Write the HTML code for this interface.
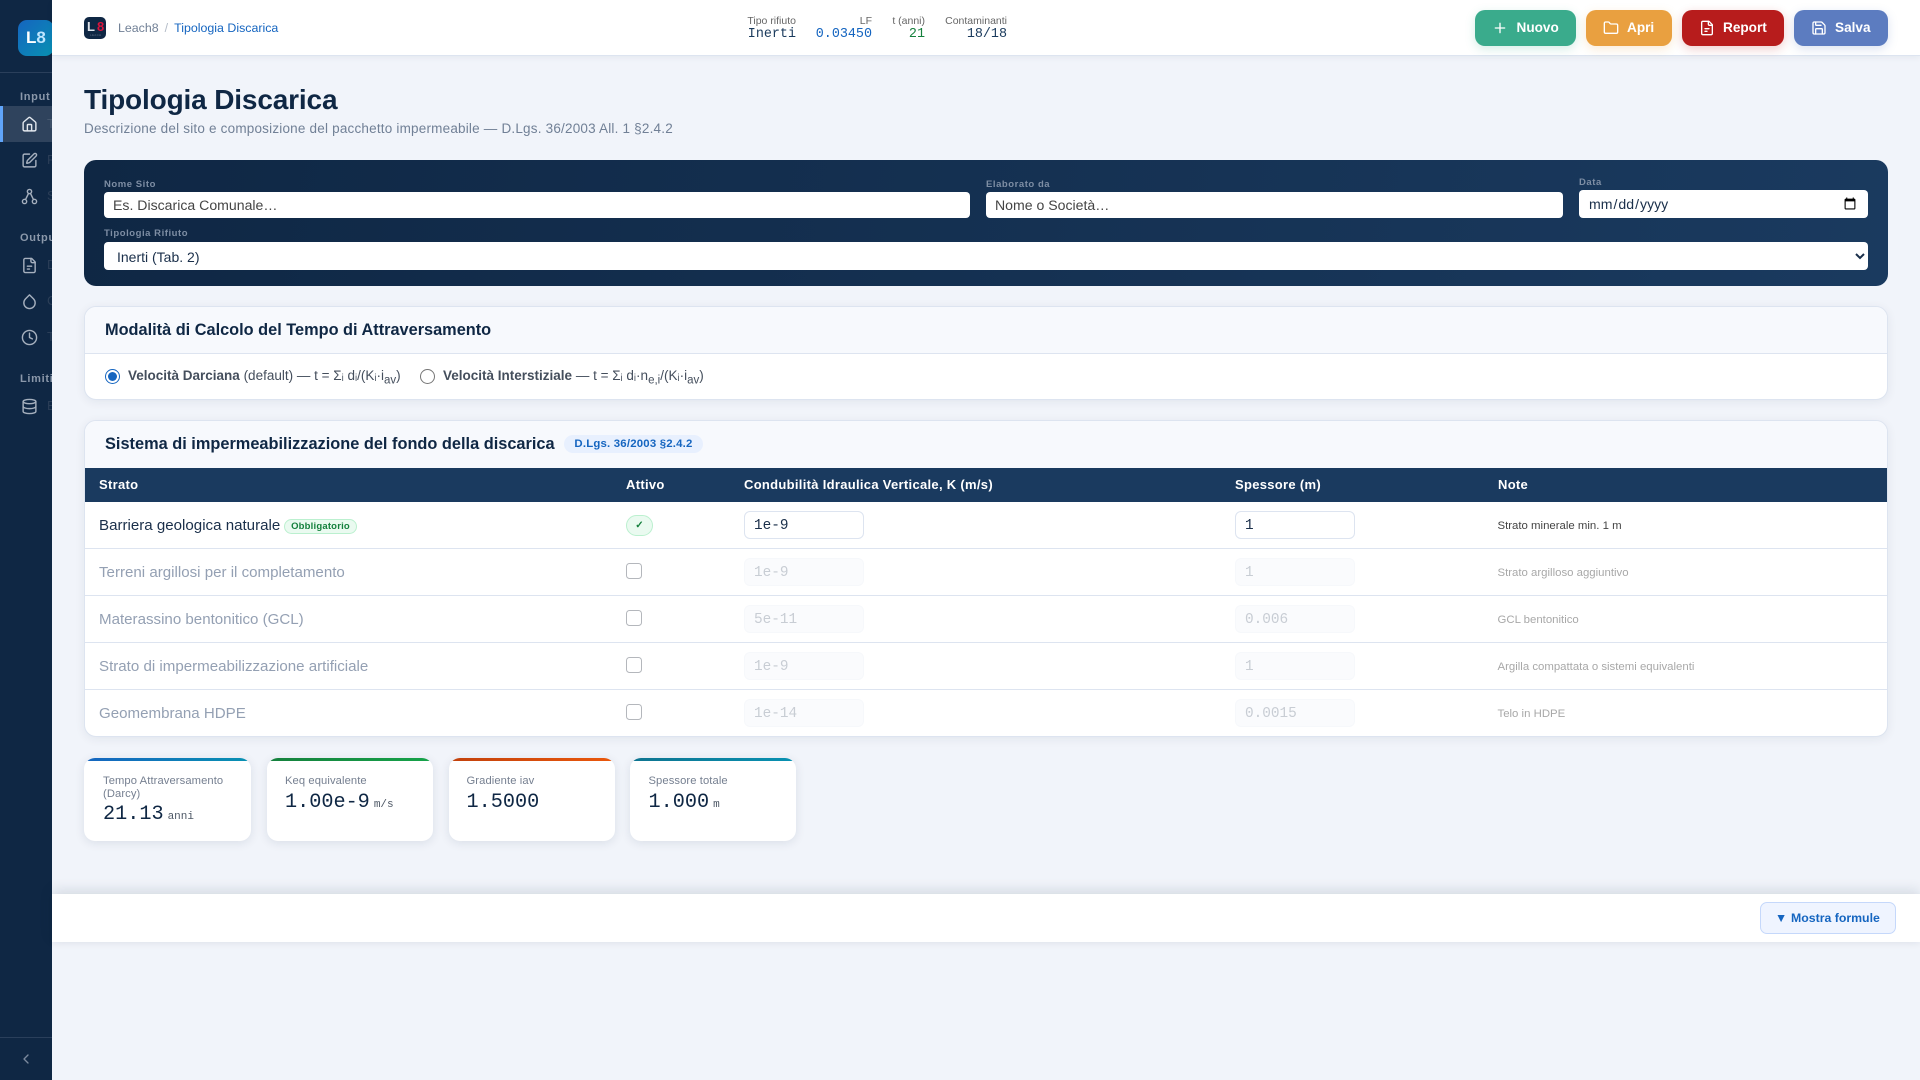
<!DOCTYPE html>
<html lang="it"><head><meta charset="utf-8"><title>Tipologia Discarica</title>
<style>
*{box-sizing:border-box}
html,body{margin:0;padding:0;width:1920px;height:1080px;overflow:hidden;background:#f1f4fa;font-family:"Liberation Sans",sans-serif}
.t{position:absolute;white-space:nowrap}
.m{font-family:"Liberation Mono",monospace}
svg.i{position:absolute;fill:none;stroke:currentColor;stroke-width:2;stroke-linecap:round;stroke-linejoin:round}
.abs{position:absolute}
.sec{position:absolute;left:20px;font-size:11px;font-weight:700;letter-spacing:.7px;color:#8b98aa;line-height:14px;white-space:nowrap}
.sl{position:absolute;left:47px;font-size:13px;color:#2b3e57;line-height:16px;width:5px;overflow:hidden}
.btn{position:absolute;top:10px;height:36px;border-radius:10px;color:#fff}
.btn b{position:absolute;top:0;line-height:35px;font-size:13.6px;white-space:nowrap}
.btn svg{top:10px;width:16px;height:16px;color:#fff}
.lbl{position:absolute;font-size:9.5px;font-weight:700;letter-spacing:.55px;color:#7e8ea4;line-height:12px;white-space:nowrap}
.f{position:absolute;border:0;margin:0;background:#fff;border-radius:4px;font:14.1px "Liberation Sans",sans-serif;color:#444;padding:0 9px;outline:0}
.card{position:absolute;left:84px;width:1804px;background:#fff;border:1px solid #dde4f0;border-radius:12px;box-shadow:0 2px 10px rgba(15,39,68,.07)}
.row{position:absolute;left:85px;width:1802px;height:47px;border-bottom:1.5px solid #dde4f0}
.th{position:absolute;top:477px;line-height:15px;font-size:13px;font-weight:700;letter-spacing:.3px;color:#fff;white-space:nowrap}
.nm{position:absolute;left:14px;line-height:18px;top:15px;font-size:15.1px;color:#1a2f4a;white-space:nowrap}
.off .nm{color:#94a0b3}
.in{position:absolute;top:9px;width:120px;height:28px;border:1.5px solid #dde4f0;border-radius:6px;background:#fff;font:14.4px/28px "Liberation Mono",monospace;color:#1a2f4a;padding-left:9px}
.off .in{background:#fafbfd;border-color:#f6f8fb;color:#c8cdd4}
.nt{position:absolute;left:1412.5px;top:17px;font-size:11.4px;line-height:14px;color:#444;white-space:nowrap}
.off .nt{color:#a8a8a8}
.cb{position:absolute;left:541px;top:14px;width:16px;height:16px;border:1.2px solid #b4b7bc;border-radius:3.5px;background:#fff}
.st{position:absolute;top:758px;height:83px;width:166px;background:#fff;border-radius:11px;overflow:hidden;box-shadow:0 2px 10px rgba(15,39,68,.10)}
.st i{position:absolute;left:0;top:0;right:0;height:3px}
.st .l{position:absolute;left:19px;top:17px;font-size:11.2px;line-height:12.5px;letter-spacing:.1px;color:#757f90;width:142px}
.st .v{position:absolute;left:19px;font:20.2px/24px "Liberation Mono",monospace;color:#0f2744;white-space:nowrap}
.st .v span{font-size:11px;color:#4d5765;margin-left:4px}
.hl{position:absolute;font-size:10.5px;line-height:12px;color:#666;white-space:nowrap;text-align:right}
.hv{position:absolute;font:13.4px/15px "Liberation Mono",monospace;white-space:nowrap;text-align:right}
</style></head><body>

<!-- sidebar -->
<div class="abs" style="left:0;top:0;width:52px;height:1080px;background:#0f2744;overflow:hidden">
  <div class="abs" style="left:18px;top:20px;width:36px;height:36px;border-radius:9px;background:linear-gradient(135deg,#1565c0,#0891b2)"></div>
  <div class="t" style="left:26px;top:28px;font-size:17px;font-weight:700;line-height:20px;color:#fff">L<span style="color:#bfe6ff">8</span></div>
  <div class="abs" style="left:0;top:72px;width:52px;height:1px;background:#2a3f5b"></div>
  <div class="sec" style="top:90px">Input</div>
  <div class="abs" style="left:0;top:106px;width:52px;height:36px;background:#2f435d;border-left:3px solid #60a5fa"></div>
  <svg class="i" viewBox="0 0 24 24" style="left:20.5px;top:115.5px;width:17px;height:17px;color:#e3e8ee"><path d="M15 21v-8a1 1 0 0 0-1-1h-4a1 1 0 0 0-1 1v8"/><path d="M3 10a2 2 0 0 1 .709-1.528l7-5.999a2 2 0 0 1 2.582 0l7 5.999A2 2 0 0 1 21 10v9a2 2 0 0 1-2 2H5a2 2 0 0 1-2-2z"/></svg>
  <div class="sl" style="top:116px;color:#46586f">T</div>
  <svg class="i" viewBox="0 0 24 24" style="left:20.5px;top:151.5px;width:17px;height:17px;color:#a6b0be"><path d="M12 3H5a2 2 0 0 0-2 2v14a2 2 0 0 0 2 2h14a2 2 0 0 0 2-2v-7"/><path d="M18.375 2.625a1 1 0 0 1 3 3l-9.013 9.014a2 2 0 0 1-.853.505l-2.873.84a.5.5 0 0 1-.62-.62l.84-2.873a2 2 0 0 1 .506-.852z"/></svg>
  <div class="sl" style="top:152px">P</div>
  <svg class="i" viewBox="0 0 24 24" style="left:20.5px;top:187.5px;width:17px;height:17px;color:#a6b0be"><circle cx="12" cy="5" r="3"/><circle cx="5" cy="19" r="3"/><circle cx="19" cy="19" r="3"/><path d="M10.6 7.7 6.4 16.3M13.4 7.7l4.2 8.6"/></svg>
  <div class="sl" style="top:188px">S</div>
  <div class="sec" style="top:231px">Output</div>
  <svg class="i" viewBox="0 0 24 24" style="left:20.5px;top:256.5px;width:17px;height:17px;color:#a6b0be"><path d="M15 2H6a2 2 0 0 0-2 2v16a2 2 0 0 0 2 2h12a2 2 0 0 0 2-2V7z"/><path d="M14 2v4a2 2 0 0 0 2 2h4"/><path d="M9 13h6M9 17h3"/></svg>
  <div class="sl" style="top:257px">D</div>
  <svg class="i" viewBox="0 0 24 24" style="left:20.5px;top:292.5px;width:17px;height:17px;color:#a6b0be"><path d="M12 2.69l5.66 5.66a8 8 0 1 1-11.31 0z"/></svg>
  <div class="sl" style="top:293px">C</div>
  <svg class="i" viewBox="0 0 24 24" style="left:20.5px;top:328.5px;width:17px;height:17px;color:#a6b0be"><circle cx="12" cy="12" r="10"/><path d="M12 6v6l4 2"/></svg>
  <div class="sl" style="top:329px">T</div>
  <div class="sec" style="top:372px">Limiti</div>
  <svg class="i" viewBox="0 0 24 24" style="left:20.5px;top:397.5px;width:17px;height:17px;color:#a6b0be"><ellipse cx="12" cy="5" rx="9" ry="3"/><path d="M3 5v14a9 3 0 0 0 18 0V5"/><path d="M3 12a9 3 0 0 0 18 0"/></svg>
  <div class="sl" style="top:398px">B</div>
  <div class="abs" style="left:0;top:1037px;width:52px;height:1px;background:#2a3f5b"></div>
  <svg class="i" viewBox="0 0 24 24" style="left:18px;top:1051px;width:16px;height:16px;color:#7b8a9e"><path d="m15 18-6-6 6-6"/></svg>
</div>

<!-- topbar -->
<div class="abs" style="left:52px;top:0;width:1868px;height:56px;background:#fff;border-bottom:1px solid #dde4f0;box-shadow:0 2px 6px rgba(15,39,68,.05)"></div>
<div class="abs" style="left:84px;top:17px;width:22px;height:22px;border-radius:5px;background:#0f2744"></div>
<div class="t" style="left:87px;top:20px;font-size:13px;font-weight:700;line-height:14px;color:#dfe4ea">L<span style="color:#dc143c;margin-left:2px">8</span></div>
<div class="t" style="left:90px;top:33px;font-size:3px;line-height:4px;letter-spacing:.3px;color:#5c6d84">LEACH</div>
<div class="t" style="left:118px;top:20px;font-size:12.4px;line-height:16px;color:#718096">Leach8<span style="color:#b4bcc8;margin:0 6px">/</span><span style="color:#1565c0">Tipologia Discarica</span></div>

<div class="hl" style="right:1124px;top:15px">Tipo rifiuto</div>
<div class="hv" style="right:1124px;top:26.5px;color:#1a3a5c">Inerti</div>
<div class="hl" style="right:1048px;top:15px">LF</div>
<div class="hv" style="right:1048px;top:26.5px;color:#1565c0">0.03450</div>
<div class="hl" style="right:995px;top:15px">t (anni)</div>
<div class="hv" style="right:995px;top:26.5px;color:#15803d">21</div>
<div class="hl" style="right:913px;top:15px">Contaminanti</div>
<div class="hv" style="right:913px;top:26.5px;color:#1a3a5c">18/18</div>

<div class="btn" style="left:1475px;width:101px;background:#3aab8c;box-shadow:0 3px 10px rgba(58,171,140,.22)">
  <svg class="i" viewBox="0 0 24 24" style="left:17px"><path d="M5 12h14M12 5v14"/></svg><b style="left:41.5px">Nuovo</b></div>
<div class="btn" style="left:1586px;width:86px;background:#e9a040;box-shadow:0 3px 10px rgba(233,160,64,.22)">
  <svg class="i" viewBox="0 0 24 24" style="left:17px"><path d="M20 20a2 2 0 0 0 2-2V8a2 2 0 0 0-2-2h-7.9a2 2 0 0 1-1.69-.9L9.6 3.9A2 2 0 0 0 7.93 3H4a2 2 0 0 0-2 2v13a2 2 0 0 0 2 2Z"/></svg><b style="left:41px">Apri</b></div>
<div class="btn" style="left:1682px;width:102px;background:#b71c1c;box-shadow:0 3px 10px rgba(183,28,28,.22)">
  <svg class="i" viewBox="0 0 24 24" style="left:17px"><path d="M15 2H6a2 2 0 0 0-2 2v16a2 2 0 0 0 2 2h12a2 2 0 0 0 2-2V7z"/><path d="M14 2v4a2 2 0 0 0 2 2h4"/><path d="M9 13h6M9 17h3"/></svg><b style="left:41px">Report</b></div>
<div class="btn" style="left:1794px;width:94px;background:#5c7cc0;box-shadow:0 3px 10px rgba(92,124,192,.22)">
  <svg class="i" viewBox="0 0 24 24" style="left:17px"><path d="M15.2 3a2 2 0 0 1 1.4.6l3.8 3.8a2 2 0 0 1 .6 1.4V19a2 2 0 0 1-2 2H5a2 2 0 0 1-2-2V5a2 2 0 0 1 2-2z"/><path d="M17 21v-7a1 1 0 0 0-1-1H8a1 1 0 0 0-1 1v7"/><path d="M7 3v4a1 1 0 0 0 1 1h7"/></svg><b style="left:41px">Salva</b></div>

<!-- heading -->
<div class="t" style="left:84px;top:83px;font-size:28px;font-weight:700;line-height:34px;letter-spacing:-.15px;color:#0f2744">Tipologia Discarica</div>
<div class="t" style="left:84px;top:120px;font-size:13.5px;line-height:17px;letter-spacing:.2px;color:#718096">Descrizione del sito e composizione del pacchetto impermeabile — D.Lgs. 36/2003 All. 1 §2.4.2</div>

<!-- banner -->
<div class="abs" style="left:84px;top:160px;width:1804px;height:126px;border-radius:12px;background:linear-gradient(100deg,#0f2744,#1a3a5f)"></div>
<div class="lbl" style="left:104px;top:179px">Nome Sito</div>
<input class="f" style="left:104px;top:192px;width:866px;height:26px" value="Es. Discarica Comunale…">
<div class="lbl" style="left:986px;top:179px">Elaborato da</div>
<input class="f" style="left:986px;top:192px;width:577px;height:26px" value="Nome o Società…">
<div class="lbl" style="left:1579px;top:176.5px">Data</div>
<input class="f" type="date" style="left:1579px;top:190px;width:289px;height:28px;color:#1a2f4a">
<div class="lbl" style="left:104px;top:228px">Tipologia Rifiuto</div>
<select class="f" style="left:104px;top:242px;width:1764px;height:28px;color:#1a2f4a;font-size:14px;padding-top:1px"><option>Inerti (Tab. 2)</option></select>

<!-- mode card -->
<div class="card" style="top:306px;height:94px;overflow:hidden">
  <div class="abs" style="left:0;top:0;right:0;height:47px;background:#f7f9fd;border-bottom:1.5px solid #dde4f0"></div>
</div>
<div class="t" style="left:105px;top:321px;font-size:16.32px;font-weight:700;line-height:19px;color:#0f2744">Modalità di Calcolo del Tempo di Attraversamento</div>
<input type="radio" checked style="position:absolute;left:105px;top:369px;width:15px;height:15px;margin:0;accent-color:#1565c0">
<div class="t" style="left:128px;top:368px;font-size:13.5px;line-height:16px;color:#444e5c"><b>Velocità Darciana</b> (default) — t = Σᵢ dᵢ/(Kᵢ·i<sub style="font-size:11.5px">av</sub>)</div>
<input type="radio" style="position:absolute;left:420px;top:369px;width:15px;height:15px;margin:0">
<div class="t" style="left:443px;top:368px;font-size:13.5px;line-height:16px;color:#444e5c"><b>Velocità Interstiziale</b> — t = Σᵢ dᵢ·n<sub style="font-size:11.5px">e,i</sub>/(Kᵢ·i<sub style="font-size:11.5px">av</sub>)</div>

<!-- table card -->
<div class="card" style="top:420px;height:317px;overflow:hidden">
  <div class="abs" style="left:0;top:0;right:0;height:47px;background:#f7f9fd"></div>
  <div class="abs" style="left:0;top:47px;right:0;height:34px;background:#1a3a5f"></div>
</div>
<div class="t" style="left:105px;top:435px;font-size:16.35px;font-weight:700;line-height:19px;color:#0f2744">Sistema di impermeabilizzazione del fondo della discarica</div>
<div class="t" style="left:564px;top:435px;width:139px;height:18px;border-radius:9px;background:#e8f0fe;color:#1565c0;font-size:11.4px;font-weight:700;line-height:18px;text-align:center;letter-spacing:.2px">D.Lgs. 36/2003 §2.4.2</div>
<div class="th" style="left:99px">Strato</div>
<div class="th" style="left:626px">Attivo</div>
<div class="th" style="left:744px">Condubilità Idraulica Verticale, K (m/s)</div>
<div class="th" style="left:1235px">Spessore (m)</div>
<div class="th" style="left:1498px">Note</div>

<div class="row" style="top:502px"><div class="nm">Barriera geologica naturale</div>
  <div class="abs" style="left:199px;top:17px;width:73px;height:15px;border:1px solid #bbf0cf;background:#eafaf0;border-radius:8px;color:#15803d;font-size:9.5px;font-weight:700;line-height:14px;text-align:center;letter-spacing:.2px">Obbligatorio</div>
  <div class="abs" style="left:541px;top:13px;width:27px;height:21px;border:1px solid #bbf0cf;background:#eafaf0;border-radius:11px;color:#15803d;font-size:10px;font-weight:700;line-height:19px;text-align:center">✓</div>
  <div class="in" style="left:659px">1e-9</div><div class="in" style="left:1150px">1</div><div class="nt">Strato minerale min. 1 m</div></div>
<div class="row off" style="top:549px"><div class="nm">Terreni argillosi per il completamento</div><div class="cb"></div>
  <div class="in" style="left:659px">1e-9</div><div class="in" style="left:1150px">1</div><div class="nt">Strato argilloso aggiuntivo</div></div>
<div class="row off" style="top:596px"><div class="nm">Materassino bentonitico (GCL)</div><div class="cb"></div>
  <div class="in" style="left:659px">5e-11</div><div class="in" style="left:1150px">0.006</div><div class="nt">GCL bentonitico</div></div>
<div class="row off" style="top:643px"><div class="nm">Strato di impermeabilizzazione artificiale</div><div class="cb"></div>
  <div class="in" style="left:659px">1e-9</div><div class="in" style="left:1150px">1</div><div class="nt">Argilla compattata o sistemi equivalenti</div></div>
<div class="row off" style="top:690px;border-bottom:0"><div class="nm">Geomembrana HDPE</div><div class="cb"></div>
  <div class="in" style="left:659px">1e-14</div><div class="in" style="left:1150px">0.0015</div><div class="nt">Telo in HDPE</div></div>

<!-- stats -->
<div class="st" style="left:84px;width:167px"><i style="background:linear-gradient(90deg,#1565c0,#0891b2)"></i><div class="l">Tempo Attraversamento (Darcy)</div><div class="v" style="top:45px">21.13<span>anni</span></div></div>
<div class="st" style="left:267px"><i style="background:linear-gradient(90deg,#15803d,#16a34a)"></i><div class="l" style="left:18px">Keq equivalente</div><div class="v" style="top:33px;left:18px">1.00e-9<span>m/s</span></div></div>
<div class="st" style="left:449px"><i style="background:linear-gradient(90deg,#c2410c,#ea580c)"></i><div class="l" style="left:17.5px">Gradiente iav</div><div class="v" style="top:33px;left:17.5px">1.5000</div></div>
<div class="st" style="left:630px"><i style="background:linear-gradient(90deg,#0e7490,#0891b2)"></i><div class="l" style="left:18.5px">Spessore totale</div><div class="v" style="top:33px;left:18.5px">1.000<span>m</span></div></div>

<!-- footer strip -->
<div class="abs" style="left:52px;top:894px;width:1868px;height:48px;background:#fff;box-shadow:0 -4px 12px rgba(15,39,68,.12),0 2px 6px rgba(15,39,68,.03)"></div>
<div class="abs" style="left:1760px;top:902px;width:136px;height:32px;background:#eff4ff;border:1.5px solid #c5d8fb;border-radius:7px"></div>
<div class="t" style="left:1775px;top:910px;font-size:12.3px;font-weight:700;line-height:16px;color:#1565c0"><span style="display:inline-block;width:16px">▼</span>Mostra formule</div>

</body></html>
